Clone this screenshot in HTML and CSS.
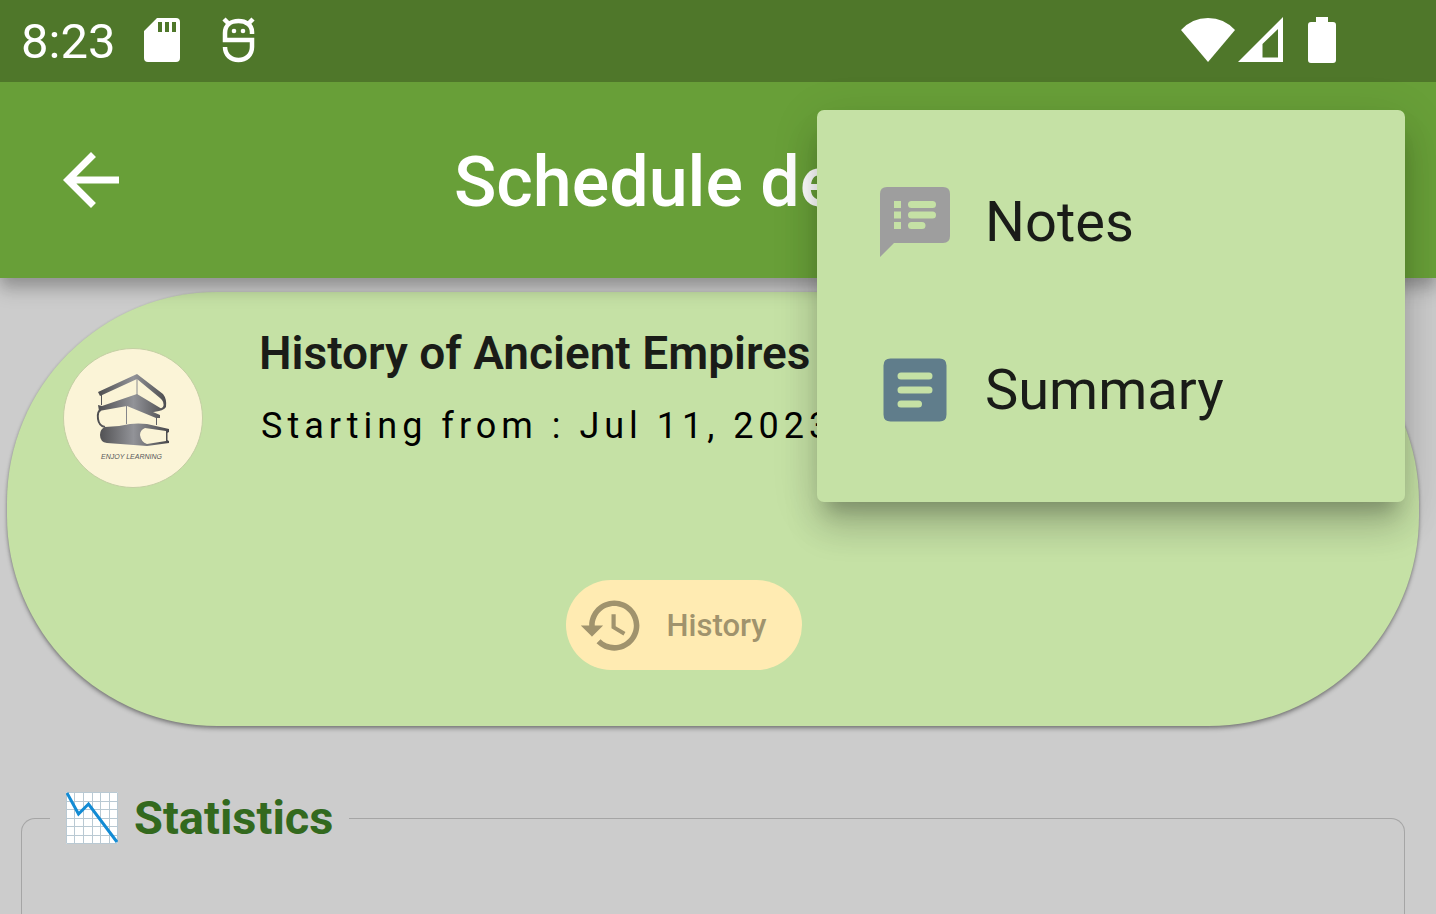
FILE: index.html
```html
<!DOCTYPE html>
<html lang="en">
<head>
<meta charset="utf-8">
<title>Schedule details</title>
<link rel="stylesheet" href="styles.css">
</head>
<body>
<div class="status-bar">
  <span class="clock">8:23</span>
  <svg class="sd-icon" viewBox="0 0 36 44" aria-hidden="true"><path fill="#fff" fill-rule="evenodd" d="M13 0H32Q36 0 36 4V40Q36 44 32 44H4Q0 44 0 40V13ZM14 4V14H18V4ZM21 4V14H25V4ZM28 4V14H32V4Z"/></svg>
  <svg class="debug-icon" viewBox="0 0 34 46" aria-hidden="true"><g fill="none" stroke="#fff" stroke-width="4.500"><path d="M30 17V15C30 8 24 4 16.500 4S3 8 3 16V23H30V30C30 38 24 43 16.500 43S3 38 3 30"/><path d="M2 2L8 8M31 2L25 8"/></g><circle cx="12" cy="14" r="2.300" fill="#fff"/><circle cx="21" cy="14" r="2.300" fill="#fff"/></svg>
  <span class="spacer"></span>
  <svg class="wifi-icon" viewBox="0 0 54 46" aria-hidden="true"><path fill="#fff" d="M0 13Q11 1 27 1T54 13L27 45Z"/></svg>
  <svg class="signal-icon" viewBox="0 0 46 46" aria-hidden="true"><path fill="#fff" fill-rule="evenodd" d="M0 45L45 0V45ZM24.500 27V40.500H40V12Z"/></svg>
  <svg class="battery-icon" viewBox="0 0 28 46" aria-hidden="true"><path fill="#fff" d="M8 0H20V5H25Q28 5 28 8V43Q28 46 25 46H3Q0 46 0 43V8Q0 5 3 5H8Z"/></svg>
</div>
<header class="app-bar">
  <button class="back" type="button" aria-label="Back"><svg class="icon" viewBox="0 0 24 24"><path fill="#fff" d="M20 11H7.830l5.590-5.590L12 4l-8 8 8 8 1.410-1.410L7.830 13H20v-2z"/></svg></button>
  <h1 class="title">Schedule details</h1>
</header>
<main class="content">
  <section class="card">
    <div class="course">
      <svg class="avatar" viewBox="0 0 140 140" role="img" aria-label="Enjoy learning">
        <defs><linearGradient id="ink" gradientUnits="userSpaceOnUse" x1="34" y1="0" x2="107" y2="0"><stop offset="0" stop-color="#4c4c4e"/><stop offset=".5" stop-color="#929398"/><stop offset="1" stop-color="#444447"/></linearGradient></defs>
        <circle cx="70" cy="70" r="69.500" fill="#fbf4d7" stroke="#c3cfa3"/>
        <path fill="url(#ink)" d="M35 44L74 26L100 46Q104 51 103 59Q101 63 90 64L88 62Q97 62 100 59Q102 54 97 50L74 31L37 48Z"/>
        <path fill="url(#ink)" d="M35 57L39 58L74 46L99 61L90 64L97 67V70L93 70L64 58L36 63Z"/>
        <path fill="none" stroke="url(#ink)" stroke-width="2" d="M38 62Q34 63 35 71Q36 78 42 79"/>
        <path fill="url(#ink)" fill-rule="evenodd" d="M42 79Q55 79 67 76Q75 75 84 76L106 81V84L104 85V92L106 93V95L84 98L44 95Q37 94 37 87Q37 81 42 79ZM103 83L82 80Q77 82 77 87Q78 94 84 96L103 93Z"/>
        <path fill="none" stroke="url(#ink)" stroke-width="1" d="M74 31V47M63.500 58V76M93.500 69V77M38.500 47V57M104 83V94"/>
        <text class="avatar-text" x="38" y="111">ENJOY LEARNING</text>
      </svg>
      <div class="course-text">
        <h2 class="course-name">History of Ancient Empires</h2>
        <p class="course-date">Starting from : Jul 11, 2023</p>
      </div>
    </div>
    <div class="actions">
      <button class="chip" type="button" disabled><svg class="chip-icon" viewBox="0 0 24 24" aria-hidden="true"><path fill="currentColor" d="M13 3c-4.970 0-9 4.030-9 9H1l3.890 3.890.07.14L9 12H6c0-3.870 3.130-7 7-7s7 3.130 7 7-3.130 7-7 7c-1.930 0-3.680-.79-4.940-2.060l-1.420 1.420C8.270 19.990 10.510 21 13 21c4.970 0 9-4.030 9-9s-4.030-9-9-9zm-1 5v5l4.280 2.540.72-1.210-3.500-2.080V8H12z"/></svg>History</button>
    </div>
  </section>
  <fieldset class="stats">
    <legend class="stats-title"><svg class="chart-icon" viewBox="0 0 52 52" aria-hidden="true"><path fill="#fff" d="M0 0H52V52H0Z"/><path fill="none" stroke="#b9c9d3" stroke-width="1" d="M.5.500H51.500V51.500H.5ZM8.500 0V52M17.500 0V52M26.500 0V52M34.500 0V52M43.500 0V52M0 9.500H52M0 17.500H52M0 26.500H52M0 34.500H52M0 43.500H52"/><path fill="none" stroke="#128bd4" stroke-width="3" d="M1 1L12.500 22L22.500 12L51 50"/></svg>Statistics</legend>
  </fieldset>
</main>
<div class="menu" role="menu">
  <button class="menu-item" type="button" role="menuitem"><svg class="icon notes" viewBox="0 0 24 24" aria-hidden="true"><path fill="currentColor" fill-rule="evenodd" d="M4 2H20Q22 2 22 4V16Q22 18 20 18H6L2 22V4Q2 2 4 2ZM6 6V8H8V6ZM6 9V11H8V9ZM6 12V14H8V12ZM11 6A1 1 0 0 0 11 8H17A1 1 0 0 0 17 6ZM11 9A1 1 0 0 0 11 11H17A1 1 0 0 0 17 9ZM11 12A1 1 0 0 0 11 14H14A1 1 0 0 0 14 12Z"/></svg>Notes</button>
  <button class="menu-item" type="button" role="menuitem"><svg class="icon summary" viewBox="0 0 24 24" aria-hidden="true"><path fill="currentColor" fill-rule="evenodd" d="M5 3H19Q21 3 21 5V19Q21 21 19 21H5Q3 21 3 19V5Q3 3 5 3ZM8 7A1 1 0 0 0 8 9H16A1 1 0 0 0 16 7ZM8 11A1 1 0 0 0 8 13H16A1 1 0 0 0 16 11ZM8 15A1 1 0 0 0 8 17H13A1 1 0 0 0 13 15Z"/></svg>Summary</button>
</div>
</body>
</html>
```
FILE: styles.css
```css
* { box-sizing: border-box; }
body {
  margin: 0;
  min-height: 100vh;
  position: relative;
  overflow: hidden;
  background: #ccc;
  color: #1a1c18;
  font-family: Roboto, sans-serif;
  display: flex;
  flex-direction: column;
}
h1, h2, p { margin: 0; font-weight: 400; }
button { border: 0; padding: 0; background: none; font: inherit; color: inherit; }
svg { display: block; flex: none; }
.icon { width: 84px; height: 84px; }

.status-bar {
  height: 82px;
  padding: 0 100px 2px 21px;
  display: flex;
  align-items: center;
  background: #4f772a;
  color: #fff;
  position: relative;
  z-index: 2;
}
.clock { font-size: 49px; line-height: 56px; padding-top: 4px; }
.sd-icon { width: 36px; height: 44px; margin-left: 29px; }
.debug-icon { width: 34px; height: 46px; margin-left: 42px; }
.spacer { flex: 1; }
.wifi-icon { width: 54px; height: 46px; }
.signal-icon { width: 46px; height: 46px; margin-left: 3px; }
.battery-icon { width: 28px; height: 46px; margin-left: 24px; }

.app-bar {
  height: 196px;
  padding: 0 49px;
  display: grid;
  grid-template-columns: 84px 1fr 96px;
  align-items: center;
  background: #689f38;
  color: #fff;
  box-shadow: 0 7px 14px rgba(0, 0, 0, .2), 0 14px 18px rgba(0, 0, 0, .12);
  position: relative;
  z-index: 1;
}
.title { padding-top: 4px; font-size: 70px; line-height: 84px; font-weight: 500; text-align: center; white-space: nowrap; }

.content { flex: 1; padding: 14px 31px 0 21px; display: flex; flex-direction: column; }
.card {
  height: 434px;
  margin: 0 -14px;
  padding: 28px 56px 56px;
  border-radius: 210px;
  background: #c5e1a5;
  box-shadow: 0 3px 4px rgba(0, 0, 0, .28), 0 1px 3px rgba(0, 0, 0, .2);
  display: flex;
  flex-direction: column;
  justify-content: space-between;
}
.course { display: flex; gap: 56px; }
.avatar { width: 140px; height: 140px; margin-top: 28px; }
.avatar-text { font: italic 7px "Liberation Sans", sans-serif; fill: #57575a; }
.course-name { font-size: 46px; line-height: 66px; font-weight: 600; white-space: nowrap; }
.course-date { font-size: 36px; line-height: 48px; margin-top: 16px; padding-left: 2px; letter-spacing: 5px; color: #000; white-space: nowrap; }
.actions { display: flex; justify-content: center; padding-right: 58px; }
.chip {
  height: 90px;
  padding: 0 36px 0 12px;
  border-radius: 45px;
  display: flex;
  align-items: center;
  gap: 22px;
  background: #ffebb2;
  color: #a0936d;
  font-size: 31px;
  font-weight: 500;
}
.chip-icon { width: 67px; height: 67px; }

.stats {
  flex: 1;
  min-width: 0;
  margin: 59px 0 0;
  padding: 0 28px;
  border: 1px solid #a5a5a5;
  border-bottom: 0;
  border-radius: 14px 14px 0 0;
}
.stats-title {
  padding: 0 16px;
  display: flex;
  align-items: center;
  gap: 16px;
  font-size: 47px;
  line-height: 66px;
  font-weight: 700;
  color: #33691e;
}
.chart-icon { width: 52px; height: 52px; }

.menu {
  position: absolute;
  z-index: 3;
  top: 110px;
  right: 31px;
  width: 588px;
  padding: 28px 0;
  border-radius: 7px;
  background: #c5e1a5;
  box-shadow: 0 18px 18px -10px rgba(0, 0, 0, .2), 0 28px 35px rgba(0, 0, 0, .14), 0 10px 49px rgba(0, 0, 0, .12);
}
.menu-item {
  width: 100%;
  height: 168px;
  padding: 0 56px;
  display: flex;
  align-items: center;
  gap: 28px;
  font-size: 56px;
  text-align: left;
}
.notes { color: #9e9e9e; }
.summary { color: #607d8b; }
```
